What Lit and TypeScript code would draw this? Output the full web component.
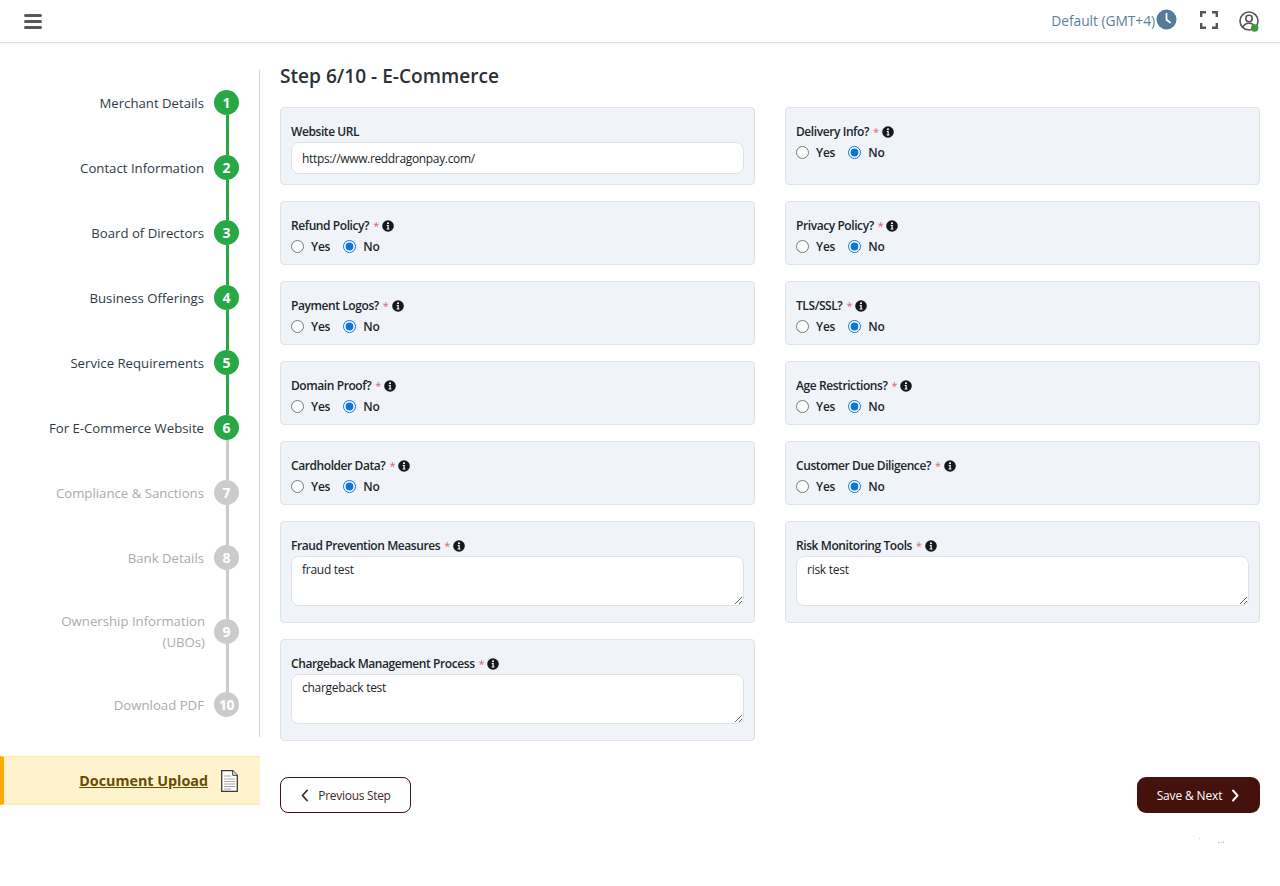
import { LitElement, html, css, svg } from "lit";
import { customElement } from "lit/decorators.js";

const steps: [string, boolean, boolean][] = [
  ["Merchant Details", true, false],
  ["Contact Information", true, false],
  ["Board of Directors", true, false],
  ["Business Offerings", true, false],
  ["Service Requirements", true, false],
  ["For E-Commerce Website", true, false],
  ["Compliance & Sanctions", false, false],
  ["Bank Details", false, false],
  ["Ownership Information (UBOs)", false, true],
  ["Download PDF", false, false],
];

const info = html`<svg class="info" viewBox="0 0 12 12"><circle cx="6" cy="6" r="5.8" fill="#16181c"/><circle cx="6" cy="3.3" r="1.05" fill="#fff"/><path d="M4.7 5h2v3.4h.8v1H4.6v-1h.9V6h-.8z" fill="#fff"/></svg>`;
const chevL = svg`<path d="M7 1.500 2.500 6.500 7 11.500" fill="none" stroke="currentColor" stroke-width="1.800" stroke-linecap="round" stroke-linejoin="round"/>`;
const chevR = svg`<path d="M3 1.500 7.500 6.500 3 11.500" fill="none" stroke="currentColor" stroke-width="1.900" stroke-linecap="round" stroke-linejoin="round"/>`;

@customElement("app-root")
export class AppRoot extends LitElement {
  static styles = css`
    :host { display: block; width: 1280px; height: 886px; background: #fff; overflow: hidden;
      font-family: "Open Sans", "Noto Sans", sans-serif; color: #212529; font-size: 13px; position: relative; }
    * { box-sizing: border-box; }
    header { height: 43px; border-bottom: 1px solid #dee0e3; box-shadow: 0 1px 2px rgba(0,0,0,.05);
      display: flex; align-items: center; padding: 0 20px 0 24px; }
    .burger { width: 18px; height: 15px; display: flex; flex-direction: column; justify-content: space-between; }
    .burger i { display: block; height: 3px; border-radius: 2px; background: #595959; }
    .tz { margin-left: auto; margin-top: -1px; color: #5d7f98; font-size: 13.800px; letter-spacing: -0.050px; }
    .clock { margin-left: 1px; margin-top: -4px; width: 21px; height: 21px; }
    .full { margin-left: 23px; margin-top: -2px; width: 18px; height: 18px; }
    .user { margin-left: 20px; margin-top: -1px; width: 22px; height: 22px; }
    .body { display: flex; align-items: flex-start; }
    aside { width: 260px; flex: none; padding-top: 27px; }
    .steps { border-right: 1px solid #d5d7da; padding: 20px 20px 20px 0; height: 667px; display: flex; flex-direction: column; gap: 40px; font-size: 13.200px; }
    .step { display: flex; align-items: center; justify-content: flex-end; gap: 10px; color: #a9abae; }
    .step .lab { text-align: right; line-height: 21px; margin-top: 1px; margin-bottom: -1px; }
    .step.done { color: #2f3a46; }
    .two .lab { width: 160px; margin-right: -1px; }
    .dot { width: 25px; height: 25px; border-radius: 50%; background: #cbcbcb; color: #fff; font-weight: 700; font-size: 14px;
      display: flex; align-items: center; justify-content: center; flex: none; position: relative; }
    .done .dot { background: #28a745; }
    .dot::after { content: ""; position: absolute; left: 12px; top: 25px; width: 3px; height: 40px; background: #cbcbcb; }
    .done .dot::after { background: #28a745; }
    .last6 .dot::after { background: #cbcbcb; }
    .before-two .dot::after { height: 49px; }
    .two .dot::after { height: 48px; }
    .final .dot::after { display: none; }
    .final .dot { font-size: 14px; letter-spacing: -0.500px; }
    .doc { margin-top: 19px; height: 49px; background: #fff3cd; border: 1px solid #ffe7a6; border-width: 1px 0; border-left: 4px solid #ffab00;
      display: flex; align-items: center; justify-content: flex-end; padding-right: 22px; gap: 13px; }
    .doc a { color: #664d03; font-weight: 700; font-size: 14.300px; text-decoration: underline; }
    main { flex: 1; padding: 22px 20px 0; }
    h1 { margin: 0 0 20px; font-size: 19.100px; line-height: 22px; font-weight: 600; color: #2b3036; }
    .grid { display: grid; grid-template-columns: 475px 475px; gap: 16px 30px; }
    .card { background: #f0f3f8; border: 1px solid #dfe2e6; border-radius: 4px; padding: 13px 10px 8px; }
    .lbl { display: flex; align-items: center; gap: 4px; font-size: 12px; font-weight: 600; line-height: 21px; color: #212529; letter-spacing: -0.420px; }
    .req { color: #e4606d; font-weight: 400; margin-left: 0; font-size: 11px; }
    .info { width: 12px; height: 12px; margin-left: -1px; }
    .radios { display: flex; gap: 13px; height: 20px; align-items: center; font-size: 12px; font-weight: 600; letter-spacing: -0.200px; }
    .radios label { display: flex; align-items: center; gap: 7px; }
    .radios input { margin: 0; width: 13px; height: 13px; accent-color: #0b76d8; }
    .inp { display: block; width: 100%; height: 32px; border: 1px solid #dee2e6; border-radius: 8px; background: #fff; padding: 0 10px;
      font: 12px "Open Sans", sans-serif; letter-spacing: -0.340px; color: #212529; outline: none; margin-bottom: 2px; }
    textarea.inp { height: 50px; padding: 4px 10px; resize: vertical; margin-bottom: 8px; letter-spacing: -0.270px; }
    .actions { display: flex; justify-content: space-between; margin-top: 36px; }
    button { height: 36px; font: 12px "Open Sans", sans-serif; display: flex; align-items: center; justify-content: center; cursor: pointer; }
    button svg { width: 10px; height: 13px; }
    .prev { width: 131px; background: #fff; border: 1px solid #45110c; border-radius: 8px; color: #3c2a28; gap: 8px; letter-spacing: -0.300px; }
    .next { width: 123px; background: #45110c; border: 0; border-radius: 9px; color: #fff; gap: 8px; font-weight: 500; letter-spacing: -0.150px; }
    .specks { position: absolute; left: 1196px; top: 836px; width: 32px; height: 8px; }
  `;

  private radio(name: string) {
    return html`<div class="card">
      <div class="lbl">${name}? <span class="req">*</span>${info}</div>
      <div class="radios">
        <label><input type="radio" name=${name} />Yes</label>
        <label><input type="radio" name=${name} checked />No</label>
      </div>
    </div>`;
  }

  private area(name: string, value: string) {
    return html`<div class="card">
      <div class="lbl">${name} <span class="req">*</span>${info}</div>
      <textarea class="inp" .value=${value}></textarea>
    </div>`;
  }

  render() {
    return html`
      <header>
        <div class="burger"><i></i><i></i><i></i></div>
        <span class="tz">Default (GMT+4)</span>
        <svg class="clock" viewBox="0 0 21 21"><circle cx="10.500" cy="10.500" r="10" fill="#557a9a"/><path d="M10.500 4.500v6.300l3.600 2.700" fill="none" stroke="#fff" stroke-width="1.700" stroke-linecap="round"/></svg>
        <svg class="full" viewBox="0 0 18 18" fill="none" stroke="#555" stroke-width="2.400"><path d="M1.200 6V1.200H6M12 1.200h4.800V6M16.800 12v4.800H12M6 16.800H1.200V12"/></svg>
        <svg class="user" viewBox="0 0 22 22" fill="none" stroke="#555" stroke-width="1.600"><circle cx="11" cy="11" r="9"/><circle cx="11" cy="8.500" r="3.200"/><path d="M4.800 17.500c1-3 3.500-4.300 6.200-4.300s5.200 1.300 6.200 4.300"/><circle cx="16.700" cy="18" r="3.700" fill="#3e9a3a" stroke="none"/></svg>
      </header>
      <div class="body">
        <aside>
          <div class="steps">
            ${steps.map(([label, done, two], i) => html`
              <div class="step ${done ? "done" : ""} ${i === 5 ? "last6" : ""} ${two ? "two" : ""} ${i === 7 ? "before-two" : ""} ${i === 9 ? "final" : ""}">
                <span class="lab">${label}</span><span class="dot">${i + 1}</span>
              </div>`)}
          </div>
          <div class="doc">
            <a href="#">Document Upload</a>
            <svg width="17" height="22" viewBox="0 0 17 22"><path d="M.7.700h11l4.600 4.600v16H.7z" fill="#fff" stroke="#3a3a3a" stroke-width="1.300"/><path d="M11.700.700v4.600h4.600" fill="#eee" stroke="#3a3a3a" stroke-width="1"/><path d="M3 6h7M3 9h11M3 11.500h11M3 14h11M3 16.500h11M3 19h7" stroke="#a5a5a5" stroke-width="1"/></svg>
          </div>
        </aside>
        <main>
          <h1>Step 6/10 - E-Commerce</h1>
          <div class="grid">
            <div class="card">
              <div class="lbl">Website URL</div>
              <input class="inp" value="https://www.reddragonpay.com/" />
            </div>
            ${this.radio("Delivery Info")}
            ${this.radio("Refund Policy")}
            ${this.radio("Privacy Policy")}
            ${this.radio("Payment Logos")}
            ${this.radio("TLS/SSL")}
            ${this.radio("Domain Proof")}
            ${this.radio("Age Restrictions")}
            ${this.radio("Cardholder Data")}
            ${this.radio("Customer Due Diligence")}
            ${this.area("Fraud Prevention Measures", "fraud test")}
            ${this.area("Risk Monitoring Tools", "risk test")}
            ${this.area("Chargeback Management Process", "chargeback test")}
          </div>
          <div class="actions">
            <button class="prev"><svg viewBox="0 0 10 13">${chevL}</svg>Previous Step</button>
            <button class="next">Save &amp; Next<svg viewBox="0 0 10 13">${chevR}</svg></button>
          </div>
        </main>
      </div>
      <svg class="specks" viewBox="0 0 32 8"><path d="M3 2h1v1H3zM22 6h2v1h-2zM25 6h1v1h-1zM27 5h1v2h-1z" fill="#c9c9c9"/></svg>
    `;
  }
}
